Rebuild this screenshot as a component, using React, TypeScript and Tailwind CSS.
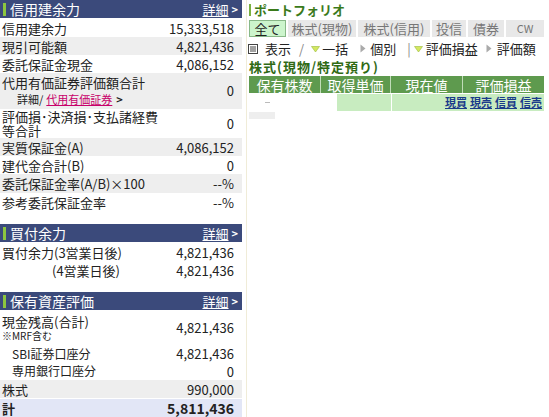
import React from "react";

const font = { fontFamily: '"Noto Sans CJK JP", "Noto Sans", sans-serif' };

function SectionHeader({ title }: { title: string }) {
  return (
    <div className="flex h-[18px] items-center justify-between bg-[#3b4a7b] pr-[4px] text-white">
      <div className="flex items-center">
        <span className="ml-[3px] h-[13px] w-[3px] bg-[#8cc63f]" />
        <span className="ml-[4px] text-[14px] leading-none">{title}</span>
      </div>
      <div className="flex items-center gap-[3px]">
        <span className="text-[13px] leading-none underline">詳細</span>
        <span className="text-[11px] font-bold leading-none">&gt;</span>
      </div>
    </div>
  );
}

function Row({
  label,
  value,
  gray,
  tall,
}: {
  label: React.ReactNode;
  value: string;
  gray?: boolean;
  tall?: boolean;
}) {
  return (
    <div
      className={`flex ${tall ? "h-[19px]" : "h-[18px]"} items-center justify-between px-[2px] text-[13px] leading-none text-[#222] ${
        gray ? "bg-[#eeeeee]" : ""
      }`}
    >
      <span>{label}</span>
      <span className="pr-[6px]">{value}</span>
    </div>
  );
}

function Down({ className }: { className: string }) {
  return (
    <svg width="9" height="8" viewBox="0 0 9 8" className={className}>
      <path d="M0.5 1.5 L8.5 1.5 L4.5 7 Z" fill="#d4e860" stroke="#9bbb3a" strokeWidth="0.6" />
    </svg>
  );
}

function Right({ className }: { className: string }) {
  return (
    <svg width="6" height="9" viewBox="0 0 6 9" className={className}>
      <path d="M0.5 0.5 L5.5 4.5 L0.5 8.5 Z" fill="#aaaaaa" />
    </svg>
  );
}

export default function App() {
  return (
    <div className="flex h-[417px] w-[549px] overflow-hidden bg-white" style={font}>
      {/* Left column */}
      <div className="w-[242px] shrink-0">
        <SectionHeader title="信用建余力" />
        <div className="pt-[1px]">
          <Row label="信用建余力" value="15,333,518" />
          <Row label="現引可能額" value="4,821,436" gray />
          <Row label="委託保証金現金" value="4,086,152" />
          <div className="flex h-[36px] items-center justify-between bg-[#eeeeee] px-[2px] text-[#222]">
            <div className="flex flex-col">
              <span className="text-[13px] leading-[17px]">代用有価証券評価額合計</span>
              <span className="flex items-center pl-[15px] text-[11px] leading-[17px]">
                詳細/
                <span className="ml-[3px] text-[#c8006a] underline">代用有価証券</span>
                <span className="ml-[4px] font-bold">&gt;</span>
              </span>
            </div>
            <span className="pr-[6px] text-[13px]">0</span>
          </div>
          <div className="flex h-[29px] items-center justify-between px-[2px] text-[#222]">
            <div className="flex flex-col text-[13px] leading-[14px]">
              <span>評価損･決済損･支払諸経費</span>
              <span>等合計</span>
            </div>
            <span className="pr-[6px] text-[13px]">0</span>
          </div>
          <Row label="実質保証金(A)" value="4,086,152" gray />
          <Row label="建代金合計(B)" value="0" />
          <Row label="委託保証金率(A/B)×100" value="--%" gray tall />
          <Row label="参考委託保証金率" value="--%" tall />
        </div>

        <div className="mt-[12px]">
          <SectionHeader title="買付余力" />
          <div className="pt-[1px]">
            <Row label="買付余力(3営業日後)" value="4,821,436" />
            <Row label={<span className="pl-[50px]">(4営業日後)</span>} value="4,821,436" />
          </div>
        </div>

        <div className="mt-[13px]">
          <SectionHeader title="保有資産評価" />
          <div className="pt-[1px]">
            <div className="flex h-[34px] items-center justify-between px-[2px] text-[#222]">
              <div className="flex flex-col">
                <span className="text-[13px] leading-[15px]">現金残高(合計)</span>
                <span className="text-[10px] leading-[13px]">※MRF含む</span>
              </div>
              <span className="pr-[6px] text-[13px]">4,821,436</span>
            </div>
            <div className="flex h-[17px] items-center justify-between pl-[12px] pr-[8px] text-[12px] leading-none text-[#222]">
              <span>SBI証券口座分</span>
              <span className="text-[13px]">4,821,436</span>
            </div>
            <div className="flex h-[18px] items-center justify-between pl-[12px] pr-[8px] text-[12px] leading-none text-[#222]">
              <span>専用銀行口座分</span>
              <span className="text-[13px]">0</span>
            </div>
            <Row label="株式" value="990,000" gray />
            <div className="mt-[1px] flex h-[18px] items-center justify-between bg-[#e2e6f6] px-[2px] text-[13px] font-bold leading-none text-[#222]">
              <span>計</span>
              <span className="pr-[6px] text-[14px]">5,811,436</span>
            </div>
          </div>
        </div>
      </div>

      {/* Right column */}
      <div className="ml-[4px] flex-1 border-l border-[#f0ecd8] pl-[2px] pr-[5px]">
        <div className="flex h-[18px] items-center pt-[1px]">
          <span className="h-[12px] w-[2px] bg-[#7ab040]" />
          <span className="ml-[3px] text-[13px] font-bold leading-none text-[#3a7a1a]">ポートフォリオ</span>
        </div>
        <div className="mt-[2px] flex h-[17px] gap-[2px] text-[13px] leading-none">
          <div className="flex w-[37px] items-center justify-center border border-[#88b888] bg-[#ccf5cc] text-[#222]">全て</div>
          <div className="flex w-[68px] items-center justify-center bg-[#e8e8e8] text-[#777]">株式(現物)</div>
          <div className="flex w-[72px] items-center justify-center bg-[#e8e8e8] text-[#777]">株式(信用)</div>
          <div className="flex w-[34px] items-center justify-center bg-[#e8e8e8] text-[#777]">投信</div>
          <div className="flex w-[36px] items-center justify-center bg-[#e8e8e8] text-[#777]">債券</div>
          <div className="flex flex-1 items-center justify-center bg-[#e8e8e8] text-[11px] text-[#777]">CW</div>
        </div>
        <div className="mt-[3px] flex h-[17px] items-center text-[13px] leading-none text-[#222]">
          <svg width="10" height="10" viewBox="0 0 10 10" className="-ml-[1px]">
            <rect x="0.5" y="0.5" width="9" height="9" fill="#fff" stroke="#444" />
            <path d="M2 3h6M2 5h6M2 7h6" stroke="#444" strokeWidth="1" />
          </svg>
          <span className="ml-[7px]">表示</span>
          <span className="ml-[8px] text-[#888]">/</span>
          <Down className="ml-[7px]" />
          <span className="ml-[2px]">一括</span>
          <Right className="ml-[12px]" />
          <span className="ml-[4px]">個別</span>
          <span className="ml-[11px] text-[#888]">|</span>
          <Down className="ml-[3px]" />
          <span className="ml-[3px]">評価損益</span>
          <Right className="ml-[8px]" />
          <span className="ml-[5px]">評価額</span>
        </div>
        <div className="mt-[2px] flex h-[15px] items-center text-[13px] font-bold leading-none tracking-[1px] text-[#2f6a14]">
          株式(現物/特定預り)
        </div>
        <div className="mt-[2px] w-[295px]">
          <div className="flex h-[17px] bg-[#5e9a4e] text-[14px] leading-none text-white">
            <div className="flex w-[72px] items-center justify-center border-r border-[#c0dcb8]">保有株数</div>
            <div className="flex w-[70px] items-center justify-center border-r border-[#c0dcb8]">取得単価</div>
            <div className="flex w-[72px] items-center justify-center border-r border-[#c0dcb8]">現在値</div>
            <div className="flex flex-1 items-center justify-center">評価損益</div>
          </div>
          <div className="mt-[1px] flex h-[17px] text-[11px] font-bold leading-none">
            <div className="flex w-[88px] items-center pl-[16px]">
              <span className="h-[1px] w-[5px] bg-[#bbbbbb]" />
            </div>
            <div className="w-[55px] border-r border-white bg-[#c8ecc0]" />
            <div className="flex flex-1 items-center justify-end gap-[3px] bg-[#c8ecc0] pr-[2px] text-[#1a3a8a]">
              <span className="underline">現買</span>
              <span className="underline">現売</span>
              <span className="underline">信買</span>
              <span className="underline">信売</span>
            </div>
          </div>
          <div className="mt-[1px] h-[7px] w-[26px] bg-[#eeeeee]" />
        </div>
      </div>
    </div>
  );
}
